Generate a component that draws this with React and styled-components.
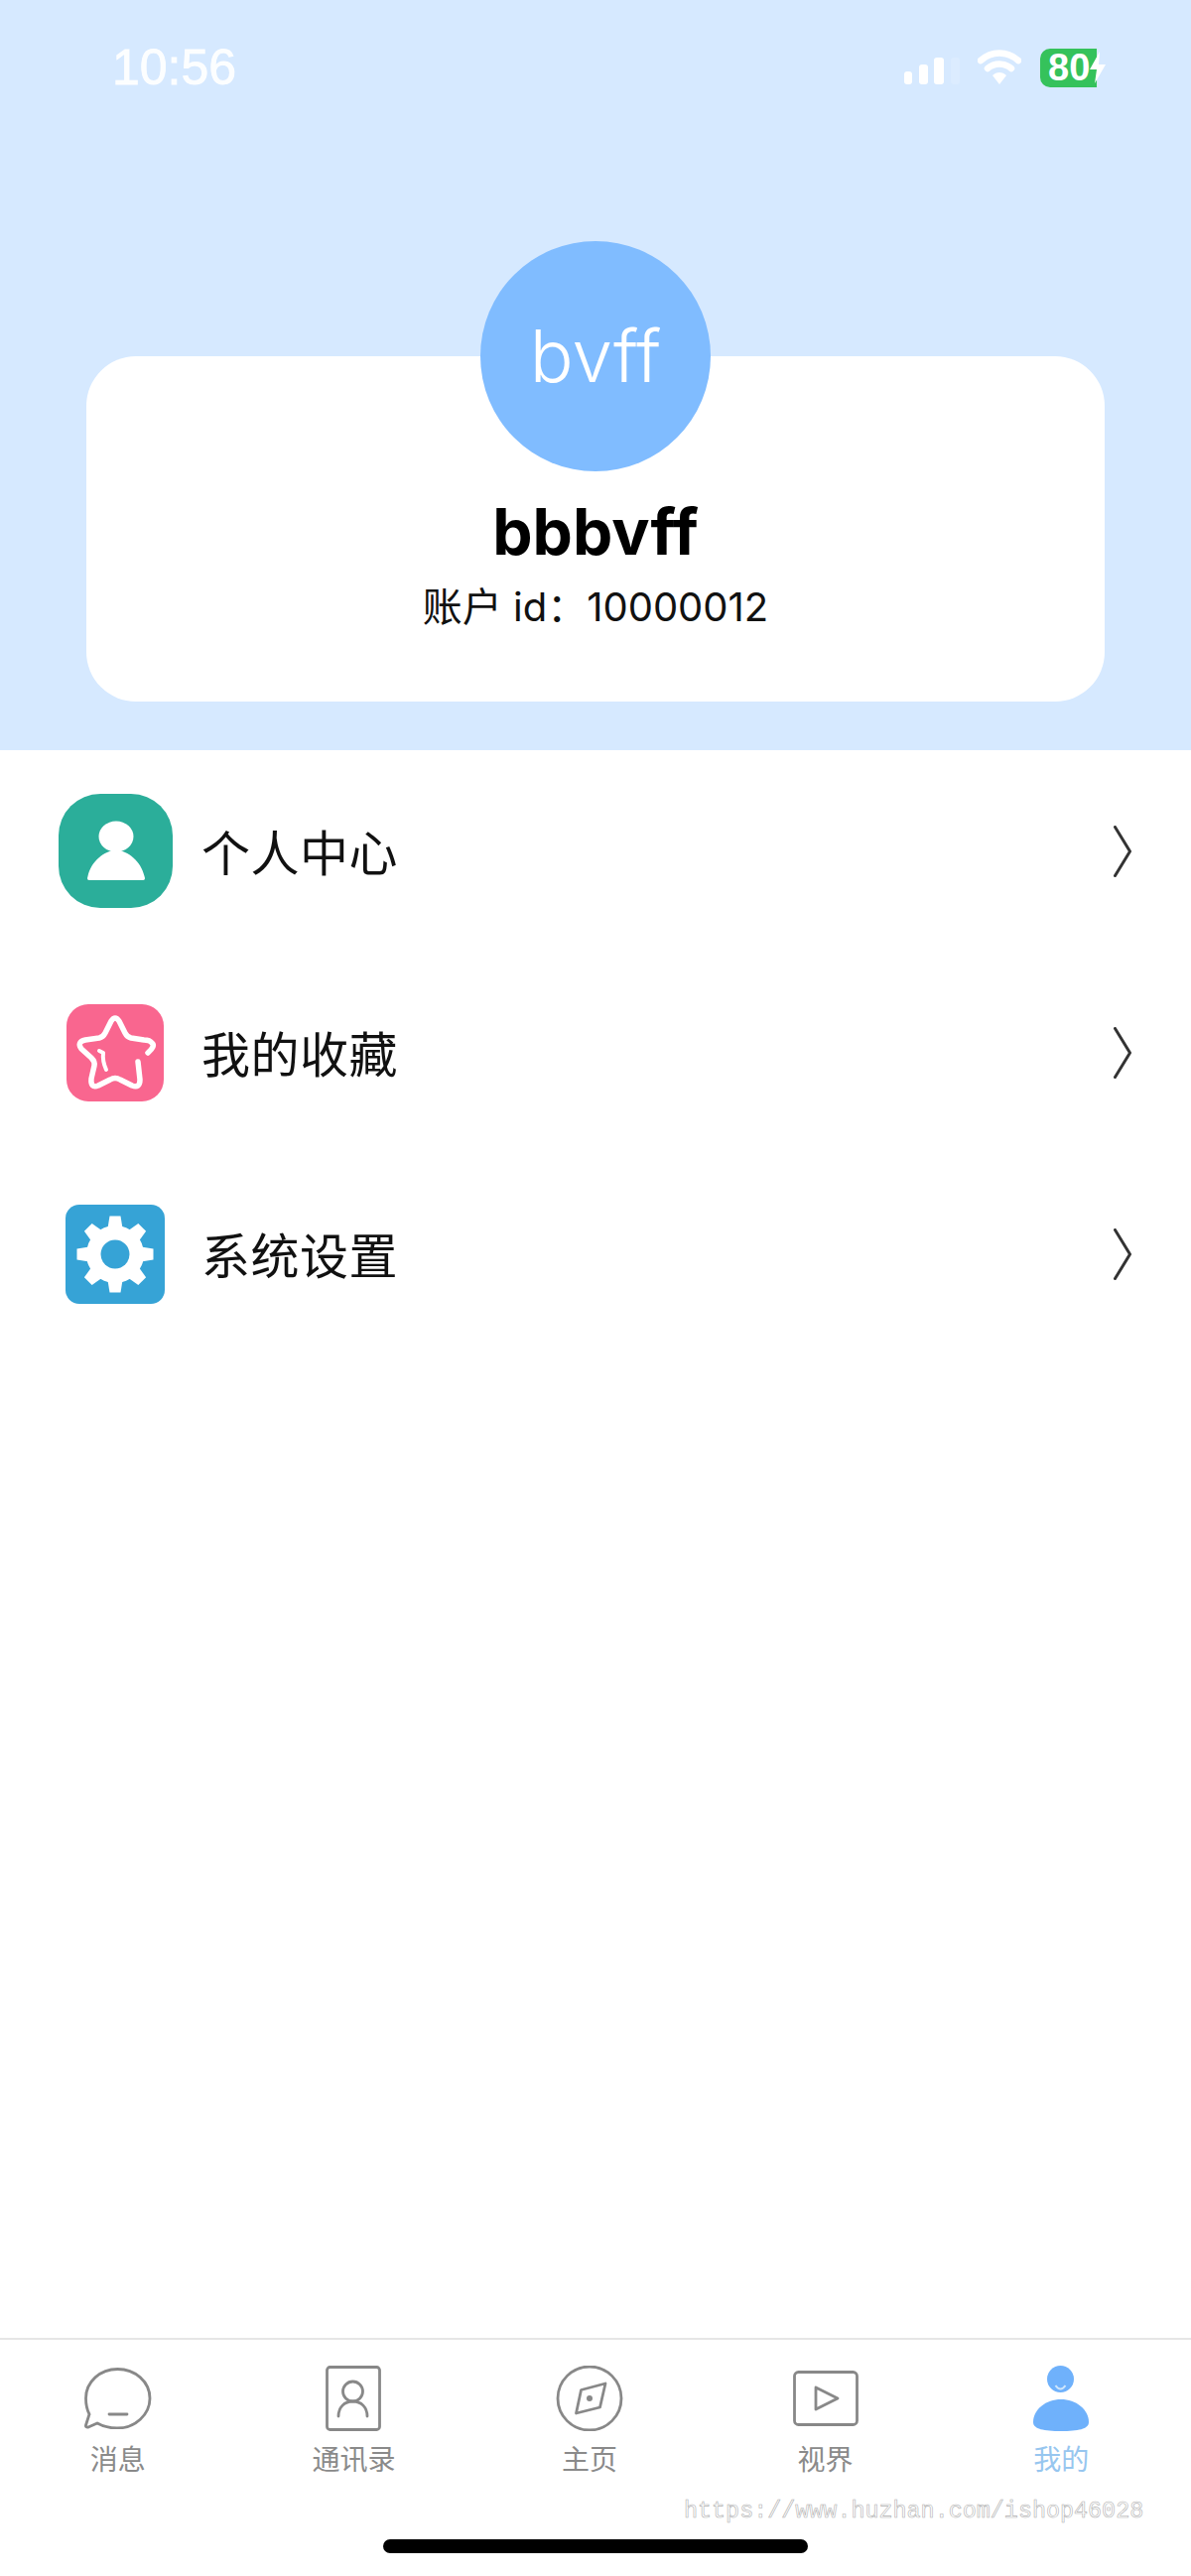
import React from 'react';
import styled, { createGlobalStyle } from 'styled-components';

const GlobalStyle = createGlobalStyle`
  html, body {
    margin: 0;
    padding: 0;
    background: #fff;
  }
  * {
    box-sizing: border-box;
  }
`;

const Page = styled.div`
  position: relative;
  display: flex;
  flex-direction: column;
  width: 1200px;
  height: 2596px;
  overflow: hidden;
  background: #fff;
  font-family: Inter, "Noto Sans CJK SC", sans-serif;
`;

const Hero = styled.header`
  height: 756px;
  background: #d6e9ff;
`;

const StatusBar = styled.div`
  display: flex;
  align-items: center;
  justify-content: space-between;
  height: 136px;
  padding: 0 85px 0 113px;
`;

const Clock = styled.span`
  font-family: "Liberation Sans", sans-serif;
  font-size: 50px;
  color: rgba(255, 255, 255, 0.92);
  -webkit-text-stroke: 0.8px rgba(255, 255, 255, 0.92);
`;

const StatusIcons = styled.div`
  display: flex;
  align-items: center;
`;

const Battery = styled.div`
  display: flex;
  align-items: center;
  width: 57px;
  height: 39px;
  margin-left: 19px;
  padding-left: 8px;
  background: #35c25b;
  border-radius: 10px 0 0 10px;
  font-family: "Liberation Sans", sans-serif;
  font-size: 38px;
  font-weight: 700;
  color: #fff;
`;

const Bolt = styled.svg`
  display: block;
  margin-left: -8px;
`;

const Card = styled.section`
  display: flex;
  flex-direction: column;
  align-items: center;
  height: 348px;
  margin: 223px 87px 0;
  background: #fff;
  border-radius: 50px;
`;

const Avatar = styled.div`
  display: flex;
  align-items: center;
  justify-content: center;
  flex: none;
  width: 232px;
  height: 232px;
  margin-top: -116px;
  padding-bottom: 2px;
  border-radius: 50%;
  background: #80bcff;
  color: #fff;
  font-size: 73px;
  font-weight: 300;
`;

const Name = styled.div`
  margin-top: 23px;
  font-size: 64px;
  line-height: 76px;
  font-weight: 700;
  color: #000;
`;

const AccountId = styled.div`
  margin-top: 14px;
  font-size: 40px;
  line-height: 48px;
  color: #111;
`;

const Menu = styled.nav`
  flex: 1;
`;

const MenuRow = styled.div`
  display: flex;
  align-items: center;
  height: 203px;
  padding: 0 60px 0 58px;
`;

const IconSlot = styled.div`
  display: flex;
  align-items: center;
  justify-content: center;
  flex: none;
  width: 116px;
  margin-right: 29px;
`;

const Tile = styled.div`
  display: flex;
  width: ${(p) => p.$size}px;
  height: ${(p) => p.$size}px;
  border-radius: ${(p) => p.$radius}px;
  background: ${(p) => p.$color};
`;

const MenuLabel = styled.span`
  flex: 1;
  margin-top: -3px;
  font-family: "Noto Sans CJK SC", sans-serif;
  font-size: 49px;
  letter-spacing: 0.5px;
  color: #111;
`;

const TabBar = styled.footer`
  height: 240px;
  padding-top: 26px;
  border-top: 2px solid #e6e6e6;
`;

const TabGrid = styled.div`
  display: grid;
  grid-template-columns: repeat(5, 1fr);
  padding-right: 12px;
`;

const Tab = styled.div`
  display: flex;
  flex-direction: column;
  align-items: center;
`;

const TabIcon = styled.div`
  display: flex;
  align-items: center;
  justify-content: center;
  height: 66px;
`;

const TabLabel = styled.span`
  margin-top: 10px;
  font-family: "Noto Sans CJK SC", sans-serif;
  font-size: 28px;
  line-height: 34px;
  color: ${(p) => (p.$active ? '#97c6ef' : '#8a8a8a')};
`;

const HomeBar = styled.div`
  width: 428px;
  height: 14px;
  margin: 65px auto 0;
  border-radius: 7px;
  background: #000;
`;

const Watermark = styled.span`
  position: absolute;
  left: 689px;
  top: 2517px;
  font-family: "Liberation Mono", monospace;
  font-size: 23.4px;
  line-height: 28px;
  color: #fff;
  -webkit-text-stroke: 0.6px #b0b0b0;
`;

const SignalIcon = () => (
  <svg width="60" height="36" viewBox="0 0 60 36">
    <rect x="0" y="22" width="8" height="13" rx="3" fill="#fff" />
    <rect x="15" y="15" width="9" height="20" rx="3" fill="#fff" />
    <rect x="30" y="8" width="10" height="27" rx="3" fill="#fff" />
    <rect x="47" y="8" width="9" height="27" rx="3" fill="#fff" opacity="0.15" />
  </svg>
);

const WifiIcon = () => (
  <svg width="44" height="36" viewBox="0 0 44 36" style={{ marginLeft: 14 }}>
    <path d="M3 11 C14 1 30 1 41 11" fill="none" stroke="#fff" strokeWidth="6.5" strokeLinecap="round" />
    <path d="M10 19 C17 13 27 13 34 19" fill="none" stroke="#fff" strokeWidth="6.5" strokeLinecap="round" />
    <path d="M15 26 L22 35 L29 26 C25 22 19 22 15 26 Z" fill="#fff" />
  </svg>
);

const PersonGlyph = () => (
  <svg width="115" height="115" viewBox="0 0 115 115">
    <ellipse cx="58" cy="43" rx="17.5" ry="15.5" fill="#fff" />
    <path d="M31 87 Q28 87 29.5 83 C33 68 46 57 58 57 C70 57 83 68 86.5 83 Q88 87 85 87 Z" fill="#fff" />
  </svg>
);

const StarGlyph = () => (
  <svg width="98" height="98" viewBox="0 0 98 98" fill="none" stroke="#fff" strokeWidth="5.5" strokeLinecap="round" strokeLinejoin="round">
    <path d="M82 49 Q90 42 86 39 Q84 36 78 36 L65 34 Q61 33 59 29 L53 17 Q49 11 45 17 L39 29 Q37 33 33 34 L19 36 Q10 38 15 45 L25 54 Q29 58 28 62 L25 75 Q24 85 32 82 L44 76 Q49 73 54 76 L66 82 Q74 85 74 76 L72 58" />
    <path d="M33 47 L37 49 Q36 57 40 66" strokeWidth="4" />
  </svg>
);

const GearGlyph = () => (
  <svg width="100" height="100" viewBox="0 0 100 100">
    <g fill="#fff">
      <circle cx="50" cy="50" r="29" />
      {[0, 45, 90, 135, 180, 225, 270, 315].map((deg) => (
        <polygon key={deg} points="42,27 44.5,11.5 55.5,11.5 58,27" transform={`rotate(${deg} 50 50)`} />
      ))}
    </g>
    <circle cx="50" cy="50" r="14.5" fill="#36a3d6" />
  </svg>
);

const Chevron = () => (
  <svg width="18" height="52" viewBox="0 0 18 52" fill="none" stroke="#333" strokeWidth="3" strokeLinecap="round" strokeLinejoin="round">
    <path d="M1.5 1.5 L16.5 26 L1.5 50.5" />
  </svg>
);

const stroke = { fill: 'none', stroke: '#888', strokeWidth: 2.8, strokeLinecap: 'round', strokeLinejoin: 'round' };

const MessageIcon = () => (
  <svg width="68" height="62" viewBox="0 0 68 62" {...stroke}>
    <path d="M5 47 L1.5 58 Q1 60.5 4 60 L13 56 C19 59.5 26 61 33 61 C51 61 66 47.5 66 31 C66 14 51 1.5 33.5 1.5 C16 1.5 1.5 14 1.5 31 C1.5 37 3 43 5 47" />
    <path d="M25 47 L43 47" />
  </svg>
);

const ContactIcon = () => (
  <svg width="56" height="66" viewBox="0 0 56 66" {...stroke}>
    <rect x="1.5" y="1.5" width="53" height="63" rx="3" />
    <circle cx="27.5" cy="26" r="10" />
    <path d="M13 51 C13 42 19 36 27.5 36 C36 36 42 42 42 51" />
  </svg>
);

const CompassIcon = () => (
  <svg width="68" height="66" viewBox="0 0 68 66" {...stroke}>
    <circle cx="34" cy="33" r="32" />
    <path d="M50 18 L44.5 42 L20.5 48 L25.5 24.5 Z" />
    <circle cx="34" cy="33" r="3" fill="#888" stroke="none" />
  </svg>
);

const PlayIcon = () => (
  <svg width="66" height="56" viewBox="0 0 66 56" {...stroke}>
    <rect x="1.5" y="1.5" width="63" height="53" rx="4" />
    <path d="M23 17 L45 28 L23 39 Z" />
  </svg>
);

const MineIcon = () => (
  <svg width="56" height="66" viewBox="0 0 56 66">
    <circle cx="27.5" cy="13.5" r="13.5" fill="#6fb1fb" />
    <path d="M22.5 20 Q27.5 27 32.5 20" fill="none" stroke="#cfe5fb" strokeWidth="2" />
    <path d="M0 57 C0 44 13 34 28 34 C43 34 56 44 56 57 C56 64 45 66 28 66 C11 66 0 64 0 57 Z" fill="#6fb1fb" />
  </svg>
);

const menuItems = [
  { label: '个人中心', color: '#2bae9a', size: 115, radius: 42, glyph: <PersonGlyph /> },
  { label: '我的收藏', color: '#f9668f', size: 98, radius: 22, glyph: <StarGlyph /> },
  { label: '系统设置', color: '#36a3d6', size: 100, radius: 14, glyph: <GearGlyph /> },
];

const tabs = [
  { label: '消息', icon: <MessageIcon /> },
  { label: '通讯录', icon: <ContactIcon /> },
  { label: '主页', icon: <CompassIcon /> },
  { label: '视界', icon: <PlayIcon /> },
  { label: '我的', icon: <MineIcon />, active: true },
];

const App = () => {
  return (
    <Page>
      <GlobalStyle />
      <Hero>
        <StatusBar>
          <Clock>10:56</Clock>
          <StatusIcons>
            <SignalIcon />
            <WifiIcon />
            <Battery>
              80
            </Battery>
            <Bolt width="18" height="34" viewBox="0 0 18 34">
              <path d="M11 1 L1 19 L8 19 L6 33 L17 14 L10 14 Z" fill="#fff" />
            </Bolt>
          </StatusIcons>
        </StatusBar>
        <Card>
          <Avatar>bvff</Avatar>
          <Name>bbbvff</Name>
          <AccountId>账户 id：10000012</AccountId>
        </Card>
      </Hero>

      <Menu>
        {menuItems.map((item) => (
          <MenuRow key={item.label}>
            <IconSlot>
              <Tile $size={item.size} $radius={item.radius} $color={item.color}>
                {item.glyph}
              </Tile>
            </IconSlot>
            <MenuLabel>{item.label}</MenuLabel>
            <Chevron />
          </MenuRow>
        ))}
      </Menu>

      <TabBar>
        <TabGrid>
          {tabs.map((tab) => (
            <Tab key={tab.label}>
              <TabIcon>{tab.icon}</TabIcon>
              <TabLabel $active={tab.active}>{tab.label}</TabLabel>
            </Tab>
          ))}
        </TabGrid>
        <HomeBar />
      </TabBar>

      <Watermark>https://www.huzhan.com/ishop46028</Watermark>
    </Page>
  );
};

export default App;
